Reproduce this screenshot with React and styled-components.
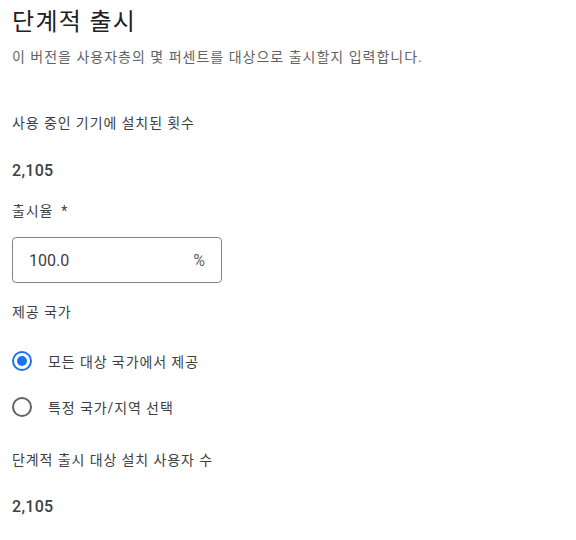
import React, { useState } from 'react';
import styled, { createGlobalStyle } from 'styled-components';

const GlobalStyle = createGlobalStyle`
  body {
    margin: 0;
    background: #ffffff;
    font-family: Roboto, "Noto Sans CJK KR", sans-serif;
    color: #202124;
  }
`;

const Page = styled.div`
  display: flex;
  flex-direction: column;
  padding: 6px 12px 20px 12px;
`;

const Title = styled.h1`
  margin: 0;
  font-size: 24px;
  line-height: 32px;
  font-weight: 400;
  letter-spacing: 1.3px;
  color: #202124;
`;

const Subtitle = styled.p`
  margin: 9px 0 0 0;
  font-size: 14px;
  line-height: 20px;
  color: #5f6368;
  letter-spacing: 1px;
`;

const Label = styled.div`
  margin-top: ${(p) => p.$gap}px;
  font-size: 14px;
  line-height: 20px;
  color: #3c4043;
  letter-spacing: 0.9px;
`;

const Value = styled.div`
  margin-top: ${(p) => p.$gap}px;
  font-size: 16px;
  line-height: 24px;
  font-weight: 500;
  color: #3c4043;
  letter-spacing: 0.3px;
`;

const Required = styled.span`
  margin-left: 8px;
`;

const Field = styled.label`
  margin-top: 16px;
  width: 210px;
  height: 46px;
  box-sizing: border-box;
  display: flex;
  align-items: center;
  padding: 0 16px 0 16px;
  border: 1px solid #80868b;
  border-radius: 4px;
`;

const Input = styled.input`
  flex: 1;
  min-width: 0;
  border: none;
  outline: none;
  background: transparent;
  font-family: Roboto, sans-serif;
  font-size: 16px;
  color: #3c4043;
  padding: 0;
`;

const Suffix = styled.span`
  font-size: 16px;
  color: #5f6368;
`;

const RadioGroup = styled.div`
  margin-top: 19px;
  display: flex;
  flex-direction: column;
  gap: 6px;
`;

const RadioRow = styled.label`
  display: flex;
  align-items: center;
  height: 40px;
  gap: 16px;
  cursor: pointer;
  font-size: 14px;
  color: #3c4043;
  letter-spacing: 0.9px;
`;

const RadioCircle = styled.span`
  width: 20px;
  height: 20px;
  box-sizing: border-box;
  border-radius: 50%;
  border: 2px solid ${(p) => (p.$checked ? '#1a73e8' : '#5f6368')};
  display: flex;
  align-items: center;
  justify-content: center;
  &::after {
    content: '';
    width: 10px;
    height: 10px;
    border-radius: 50%;
    background: #1a73e8;
    display: ${(p) => (p.$checked ? 'block' : 'none')};
  }
`;

const options = ['모든 대상 국가에서 제공', '특정 국가/지역 선택'];

const App = () => {
  const [selected, setSelected] = useState(0);
  const [rate, setRate] = useState('100.0');

  return (
    <>
      <GlobalStyle />
      <Page>
        <Title>단계적 출시</Title>
        <Subtitle>이 버전을 사용자층의 몇 퍼센트를 대상으로 출시할지 입력합니다.</Subtitle>

        <Label $gap={46}>사용 중인 기기에 설치된 횟수</Label>
        <Value $gap={26}>2,105</Value>

        <Label $gap={18}>
          출시율<Required>*</Required>
        </Label>
        <Field>
          <Input value={rate} onChange={(e) => setRate(e.target.value)} />
          <Suffix>%</Suffix>
        </Field>

        <Label $gap={19}>제공 국가</Label>
        <RadioGroup>
          {options.map((o, i) => (
            <RadioRow key={o} onClick={() => setSelected(i)}>
              <RadioCircle $checked={selected === i} />
              {o}
            </RadioRow>
          ))}
        </RadioGroup>

        <Label $gap={23}>단계적 출시 대상 설치 사용자 수</Label>
        <Value $gap={25}>2,105</Value>
      </Page>
    </>
  );
};

export default App;
